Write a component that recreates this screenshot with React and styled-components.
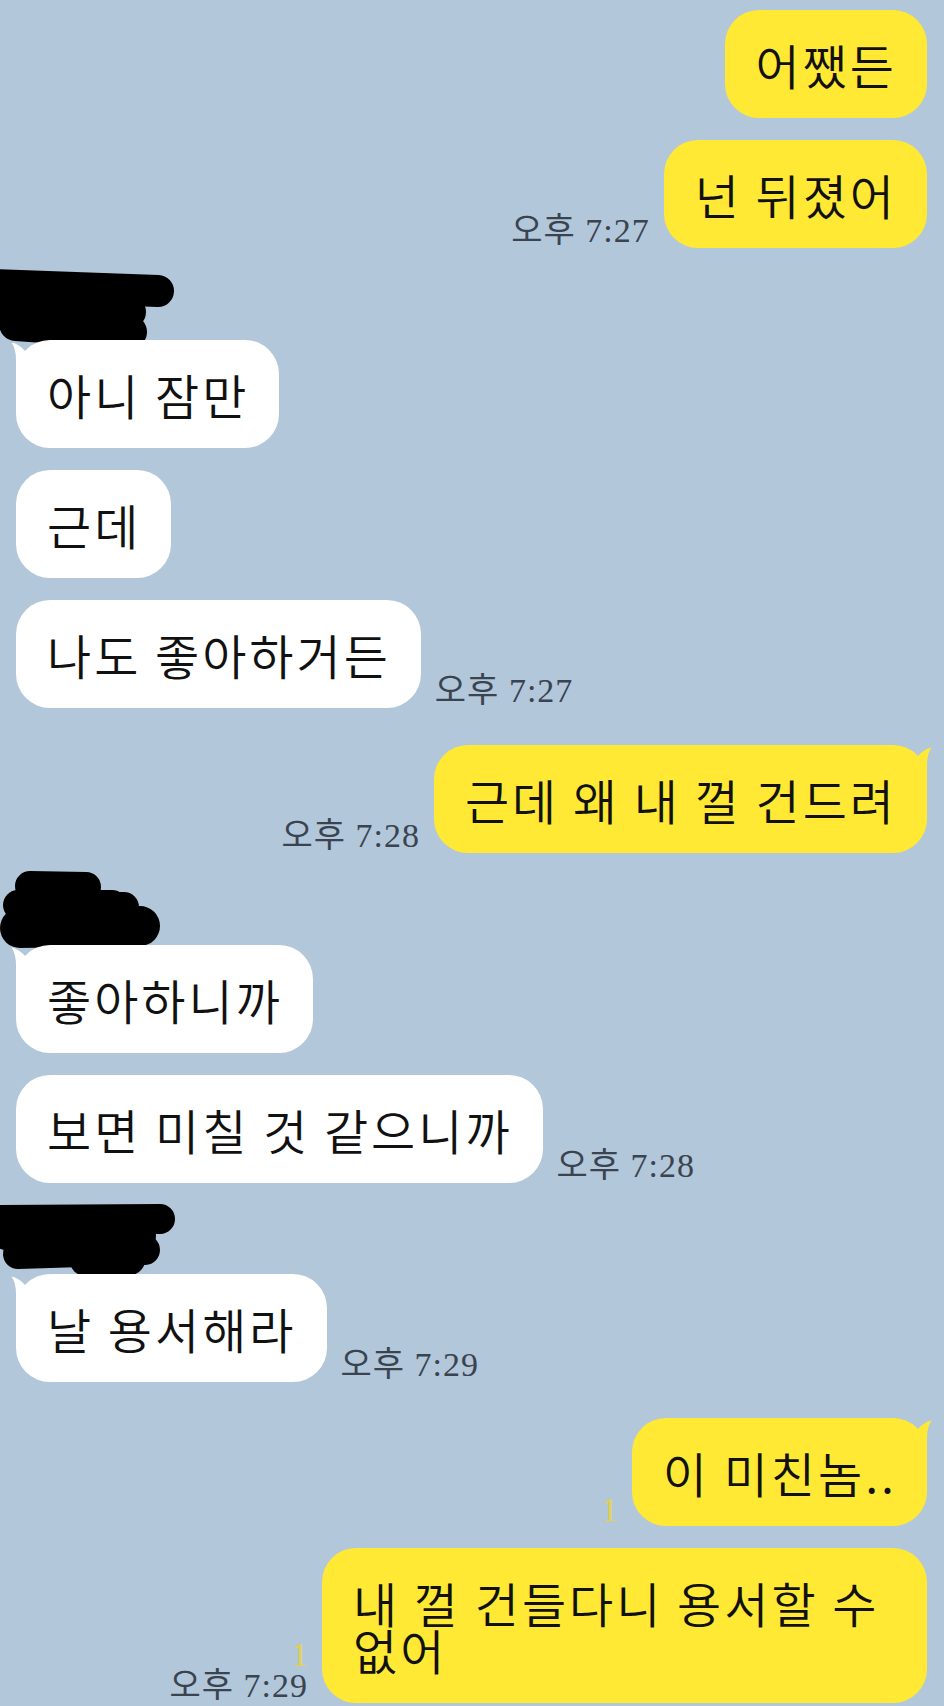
import React from 'react';
import styled, { createGlobalStyle, css } from 'styled-components';

const Global = createGlobalStyle`
  html, body { margin: 0; padding: 0; background: #b2c7da; }
  body { overflow: hidden; }
`;

const Screen = styled.main`
  width: 944px;
  height: 1706px;
  overflow: hidden;
  box-sizing: border-box;
  padding: 10px 17px 0 16px;
  background: #b2c7da;
  display: flex;
  flex-direction: column;
  font-family: "Noto Sans CJK KR", "Noto Sans", sans-serif;
`;

const Group = styled.section`
  display: flex;
  flex-direction: column;
  gap: 22px;
  align-items: ${p => (p.$me ? 'flex-end' : 'flex-start')};
  margin-top: ${p => p.$gap}px;
`;

const NameSlot = styled.div`
  height: 48px;
  margin-left: -16px;
  svg { display: block; overflow: visible; }
`;

const Row = styled.div`
  display: flex;
  flex-direction: ${p => (p.$me ? 'row-reverse' : 'row')};
  align-items: flex-end;
  gap: 14px;
`;

const rightTail = css`
  &::after {
    content: '';
    position: absolute;
    top: 0;
    right: -5px;
    width: 20px;
    height: 36px;
    background: inherit;
    clip-path: path('M0 18 L6 11 Q12 4 19.5 2.5 Q15 9 15 20 L15 36 L0 36 Z');
  }
`;

const leftTail = css`
  &::after {
    content: '';
    position: absolute;
    top: 0;
    left: -5px;
    width: 20px;
    height: 36px;
    background: inherit;
    clip-path: path('M20 18 L14 11 Q8 4 0.5 2.5 Q5 9 5 20 L5 36 L20 36 Z');
  }
`;

const Bubble = styled.div`
  position: relative;
  box-sizing: border-box;
  max-width: 605px;
  padding: 31px 30px 30px 31px;
  border-radius: 34px;
  background: ${p => (p.$me ? '#ffe934' : '#ffffff')};
  color: #111;
  font-size: 48px;
  font-weight: 350;
  letter-spacing: 3px;
  line-height: 47px;
  word-break: keep-all;
  ${p => p.$tail && (p.$me ? rightTail : leftTail)}
`;

const Meta = styled.div`
  display: flex;
  flex-direction: column;
  align-items: ${p => (p.$me ? 'flex-end' : 'flex-start')};
  padding-bottom: 1px;
  font-family: "Liberation Serif", "Noto Sans CJK KR", serif;
  white-space: nowrap;
`;

const Read = styled.span`
  color: #e4d24c;
  font-size: 33px;
  line-height: 30px;
`;

const Time = styled.span`
  color: #3a4350;
  font-size: 34px;
  letter-spacing: 1px;
  line-height: 32px;
`;

const Scribble = ({ strokes }) => (
  <svg width="180" height="80" viewBox="0 0 180 80">
    {strokes.map(([x1, y1, x2, y2, w], i) => (
      <line key={i} x1={x1} y1={y1} x2={x2} y2={y2} stroke="#000" strokeWidth={w} strokeLinecap="round" />
    ))}
  </svg>
);

const scribbles = {
  1: [
    [-10, 15, 158, 21, 32],
    [0, 38, 130, 42, 32],
    [16, 54, 130, 62, 34],
  ],
  2: [
    [30, 11, 86, 12, 30],
    [108, 32, 124, 32, 30],
    [18, 30, 112, 30, 30],
    [20, 53, 140, 51, 40],
  ],
  3: [
    [-5, 16, 160, 15, 30],
    [6, 32, 142, 32, 28],
    [18, 50, 145, 46, 30],
    [85, 57, 130, 56, 30],
  ],
};

const groups = [
  {
    me: true, gap: 0,
    msgs: [
      { text: '어쨌든' },
      { text: '넌 뒤졌어', time: '오후 7:27' },
    ],
  },
  {
    me: false, gap: 22, name: 1,
    msgs: [
      { text: '아니 잠만', tail: true },
      { text: '근데' },
      { text: '나도 좋아하거든', time: '오후 7:27' },
    ],
  },
  {
    me: true, gap: 37,
    msgs: [{ text: '근데 왜 내 껄 건드려', tail: true, time: '오후 7:28' }],
  },
  {
    me: false, gap: 22, name: 2,
    msgs: [
      { text: '좋아하니까', tail: true },
      { text: '보면 미칠 것 같으니까', time: '오후 7:28' },
    ],
  },
  {
    me: false, gap: 21, name: 3,
    msgs: [{ text: '날 용서해라', tail: true, time: '오후 7:29' }],
  },
  {
    me: true, gap: 36,
    msgs: [
      { text: '이 미친놈..', tail: true, read: '1' },
      { text: '내 껄 건들다니 용서할 수 없어', read: '1', time: '오후 7:29' },
    ],
  },
];

export default function App() {
  return (
    <>
      <Global />
      <Screen>
        {groups.map((g, gi) => (
          <Group key={gi} $me={g.me} $gap={g.gap}>
            {g.name && (
              <NameSlot>
                <Scribble strokes={scribbles[g.name]} />
              </NameSlot>
            )}
            {g.msgs.map((m, mi) => (
              <Row key={mi} $me={g.me}>
                <Bubble $me={g.me} $tail={m.tail}>{m.text}</Bubble>
                {(m.time || m.read) && (
                  <Meta $me={g.me}>
                    {m.read && <Read>{m.read}</Read>}
                    {m.time && <Time>{m.time}</Time>}
                  </Meta>
                )}
              </Row>
            ))}
          </Group>
        ))}
      </Screen>
    </>
  );
}
